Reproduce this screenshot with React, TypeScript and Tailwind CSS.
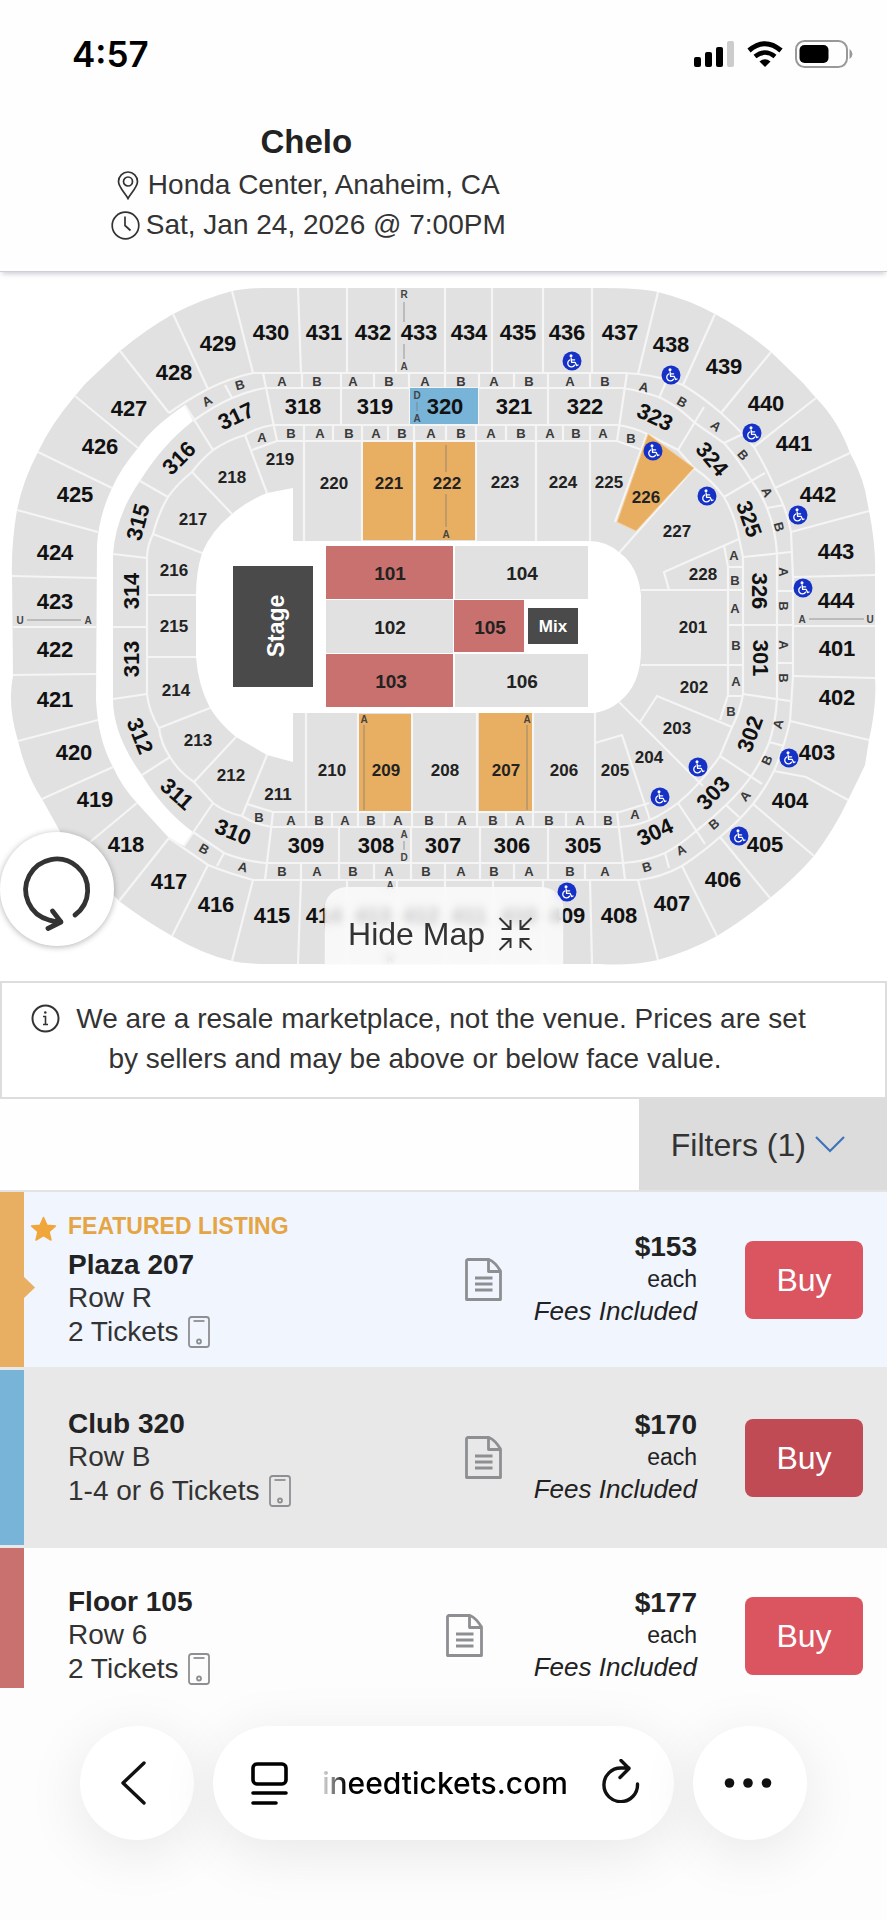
import React from "react";

type Label = [text: string, x: number, y: number, rotate?: number];

const upperLabels: Label[] = [
  ["430", 271, 332], ["431", 324, 332], ["432", 373, 332], ["433", 419, 332],
  ["434", 469, 332], ["435", 518, 332], ["436", 567, 332], ["437", 620, 332],
  ["438", 671, 344], ["439", 724, 366], ["440", 766, 403], ["441", 794, 443],
  ["442", 818, 494], ["443", 836, 551], ["444", 836, 600], ["401", 837, 648],
  ["402", 837, 697], ["403", 817, 752], ["404", 790, 800], ["405", 765, 844],
  ["406", 723, 879], ["407", 672, 903], ["408", 619, 915], ["409", 567, 915],
  ["410", 519, 915], ["411", 469, 915], ["412", 421, 915], ["413", 373, 915],
  ["414", 324, 915], ["415", 272, 915], ["416", 216, 904], ["417", 169, 881],
  ["418", 126, 844], ["419", 95, 799], ["420", 74, 752], ["421", 55, 699],
  ["422", 55, 649], ["423", 55, 601], ["424", 55, 552], ["425", 75, 494],
  ["426", 100, 446], ["427", 129, 408], ["428", 174, 372], ["429", 218, 343],
  ["318", 303, 406], ["319", 375, 406], ["320", 445, 406], ["321", 514, 406],
  ["322", 585, 406], ["323", 655, 417, 25], ["324", 712, 459, 50],
  ["325", 749, 519, 70], ["326", 759, 591, 90], ["301", 760, 658, 90],
  ["302", 750, 734, -70], ["303", 713, 793, -46], ["304", 655, 832, -25],
  ["305", 583, 845], ["306", 512, 845], ["307", 443, 845], ["308", 376, 845],
  ["309", 306, 845], ["310", 233, 832, 22], ["311", 177, 794, 42],
  ["312", 140, 736, 68], ["313", 131, 659, -90], ["314", 131, 591, -90],
  ["315", 138, 522, -75], ["316", 179, 458, -45], ["317", 236, 416, -25],
];

const plazaLabels: Label[] = [
  ["219", 280, 459], ["218", 232, 477], ["217", 193, 519], ["216", 174, 570],
  ["215", 174, 626], ["214", 176, 690], ["213", 198, 740], ["212", 231, 775],
  ["211", 278, 794], ["210", 332, 770], ["209", 386, 770], ["208", 445, 770],
  ["207", 506, 770], ["206", 564, 770], ["205", 615, 770], ["204", 649, 757],
  ["203", 677, 728], ["202", 694, 687], ["201", 693, 627], ["228", 703, 574],
  ["227", 677, 531], ["226", 646, 497], ["225", 609, 482], ["224", 563, 482],
  ["223", 505, 482], ["222", 447, 483], ["221", 389, 483], ["220", 334, 483],
];

const floorLabels: Label[] = [
  ["101", 390, 573], ["102", 390, 627], ["103", 391, 681],
  ["104", 522, 573], ["105", 490, 627], ["106", 522, 681],
];

const rowLabels: Label[] = [
  ["A", 282, 381], ["B", 317, 381], ["A", 353, 381], ["B", 389, 381], ["A", 425, 381],
  ["B", 461, 381], ["A", 494, 381], ["B", 529, 381], ["A", 570, 381], ["B", 605, 381],
  ["B", 282, 871], ["A", 317, 871], ["B", 353, 871], ["A", 389, 871], ["B", 426, 871],
  ["A", 461, 871], ["B", 494, 871], ["A", 529, 871], ["B", 570, 871], ["A", 605, 871],
  ["A", 262, 437], ["B", 291, 433], ["A", 320, 433], ["B", 349, 433], ["A", 376, 433],
  ["B", 402, 433], ["A", 431, 433], ["B", 461, 433], ["A", 491, 433], ["B", 521, 433],
  ["A", 550, 433], ["B", 576, 433], ["A", 603, 433], ["B", 631, 438],
  ["B", 259, 817], ["A", 291, 820], ["B", 319, 820], ["A", 345, 820], ["B", 371, 820],
  ["A", 398, 820], ["B", 429, 820], ["A", 462, 820], ["B", 493, 820], ["A", 520, 820],
  ["B", 549, 820], ["A", 580, 820], ["B", 608, 820], ["A", 635, 814],
  ["A", 734, 555], ["B", 735, 580], ["A", 735, 608], ["B", 736, 645], ["A", 736, 681],
  ["B", 731, 711],
  ["A", 644, 387, 15], ["B", 682, 402, 30], ["A", 716, 426, 40], ["B", 743, 455, 50],
  ["A", 767, 492, 65], ["B", 779, 527, 75], ["A", 783, 572, 90], ["B", 783, 606, 90],
  ["A", 783, 645, 90], ["B", 783, 678, 90], ["A", 778, 724, -75], ["B", 767, 760, -65],
  ["A", 745, 796, -50], ["B", 714, 824, -40], ["A", 681, 850, -25], ["B", 647, 867, -15],
  ["A", 207, 401, -30], ["B", 240, 385, -15], ["B", 204, 849, 30], ["A", 243, 867, 15],
];

const markerLabels: Label[] = [
  ["R", 404, 294], ["A", 404, 366], ["U", 20, 620], ["A", 88, 620],
  ["A", 802, 619], ["U", 870, 619], ["D", 417, 395], ["A", 417, 418],
  ["A", 404, 834], ["D", 404, 857], ["A", 446, 534], ["A", 364, 719],
  ["A", 527, 719], ["A", 390, 885], ["R", 390, 958],
];

const accessible: [number, number][] = [
  [572, 361], [671, 375], [752, 433], [653, 451], [707, 496], [798, 515],
  [803, 588], [789, 758], [739, 836], [698, 767], [660, 797], [567, 892],
];

const bowl =
  "M298 288 C272 288 250 287 232 291 Q202 299 173 314 Q145 330 120 351 L85 384 L75 396 Q51 424 38 452 Q23 480 17 510 Q11 545 12 577 L13 676 Q7 705 18 741 Q26 775 42 799 L62 835 L90 870 L119 901 Q144 920 172 936 Q202 954 232 961 Q245 964 270 964 L600 964 Q630 966 658 960 Q690 951 717 936 Q745 919 770 898 Q795 878 814 856 Q835 828 848 800 Q858 780 865 765 L869 740 Q877 705 875 678 L875 575 Q876 545 869 511 L865 490 Q860 471 850 453 Q838 420 816 398 L803 383 L771 352 Q745 330 715 314 Q690 300 658 292 Q640 288 600 288 Z";

const concourse =
  "M185 405 Q152 427 138 448 Q121 468 112 488 Q99 515 97 545 L96 700 Q98 740 113 767 Q122 787 137 803 L169 838 L184 846 L193 832 Q163 810 142 775 Q113 735 113 699 L113 554 Q116 515 140 481 Q163 444 193 421 Z";

const bowlFloor =
  "M293 488 L267 493 Q247 501 232 514 Q211 531 202 553 Q196 572 196 595 L196 657 Q198 685 210 708 Q220 724 236 737 L267 755 L293 762 L293 713 L595 713 Q610 710 619 702 Q641 685 641 650 L641 595 Q638 566 620 553 Q607 541 589 541 L293 541 Z";

const rings = [
  "M169 413 Q187 400 208 389 Q230 378 253 373 L625 373 L638 374 Q662 377 683 385 Q704 398 721 413 Q740 430 754 447 Q766 467 775 488 Q787 509 791 532 L793 578 L793 676 L790 721 Q784 748 774 771 Q765 789 753 804 Q738 822 720 837 Q702 853 682 866 Q660 878 638 880 L253 880 Q228 873 208 865 L169 838",
  "M193 421 Q212 407 232 398 Q248 391 265 388 L622 388 Q643 391 661 398 Q679 407 695 423 L724 443 Q739 460 751 480 Q761 493 767 508 Q776 530 777 555 L777 698 Q776 722 769 743 Q762 760 752 775 Q741 791 726 805 Q711 820 695 832 Q680 845 665 853 Q645 862 622 863 L266 863 Q244 861 224 853 L193 832",
  "M147 627 L147 558 Q147 546 153 534 Q158 514 168 497 Q178 483 192 472 Q201 460 213 450 Q228 440 245 435 Q258 427 273 425 L617 425 Q633 427 647 434 L678 450 L694 468 Q713 481 724 497 Q735 516 739 538 L743 557 L743 694 Q740 712 732 727 L720 756 Q700 785 678 803 Q665 813 650 820 Q636 826 620 827 L272 827 Q256 825 242 816 Q226 813 213 803 L194 782 Q179 772 170 757 Q161 744 159 728 Q149 712 147 694 Z",
  "M252 450 L277 441 L617 441 L642 450",
  "M247 804 L273 812 L620 812 L649 803",
];

const dividers = [
  // upper deck
  "M298 288L301 373M347 288V373M396 288V373M445 288V373M492 288V373M543 288V373M592 288V373",
  "M298 964L301 880M347 964V880M397 964V880M445 964V880M493 964V880M543 964V880M592 964L590 880",
  "M232 291L253 373M173 314L208 389M120 351L169 413M75 396L138 448M38 452L112 488M17 510L98 532M12 576L97 578M13 627H96M13 675L96 674M18 741L98 720M42 799L113 767M90 842L137 803M119 901L169 838M172 936L208 865M232 961L253 880",
  "M658 292L638 374M715 314L683 385M771 352L721 413M816 398L754 447M850 453L775 488M869 511L791 532M875 575L793 577M875 626H793M875 678L793 676M869 740L790 721M848 800L806 777L774 771M814 856L753 804M770 898L720 837M717 936L682 866M658 960L638 880",
  // club ring
  "M263 373L277 441M341 388V425M410 388V425M478 388V425M548 388V425M627 373L617 441M273 812L265 880M339 827V863M411 827V863M480 827V863M548 827V863M617 812L625 880",
  "M185 405L213 450M140 481L168 497M113 554L147 558M113 627H147M113 699L147 694M142 775L170 757M184 846L213 803",
  "M704 407L678 450M765 473L724 497M791 552L743 557M743 625H793M743 694L790 701M720 756L762 784M678 803L705 844",
  // row strips
  "M302 373V388M341 373V388M374 373V388M409 373V388M445 373V388M479 373V388M514 373V388M548 373V388M590 373V388M301 863V880M339 863V880M374 863V880M411 863V880M445 863V880M480 863V880M514 863V880M548 863V880M585 863V880",
  "M333 425V441M388 425V441M446 425V441M506 425V441M563 425V441M332 812V827M384 812V827M446 812V827M506 812V827M566 812V827",
  "M667 380L659 398M745 433L724 443M784 505L767 508M777 591H793M777 663H793M784 746L769 742M739 817L726 805M669 868L665 853M225 385L232 398M224 853L217 866",
  // plaza
  "M304 425V541M362 425V541M414 425V541M476 425V541M536 425V541M590 425V541M306 713V827M358 713V827M412 713V827M477 713V827M533 713V827M595 713V827",
  "M245 435L267 493M192 472L232 514M153 534L202 553M147 595H196M147 657H196M159 728L210 708M194 782L236 737M242 816L267 755",
  "M647 434L615 522M694 468L619 553M739 539L664 572L669 590M724 545L728 567V695L720 720M728 567H743M641 590H743M728 625H743M641 665H743M728 696H743M640 722L657 696L732 727M619 702L703 786M595 743L622 735L650 820",
];

function MapText({ items, className }: { items: Label[]; className: string }) {
  return (
    <g className={className} textAnchor="middle" dominantBaseline="central">
      {items.map(([text, x, y, r], i) => (
        <text key={i} x={x} y={y} transform={r ? `rotate(${r} ${x} ${y})` : undefined}>
          {text}
        </text>
      ))}
    </g>
  );
}

function SeatMap() {
  return (
    <svg
      viewBox="0 273 887 708"
      className="block w-full font-['Liberation_Sans',Arial,sans-serif] font-bold"
      role="img"
      aria-label="Honda Center seating map"
    >
      <path d={bowl} fill="#e1e1e1" />
      <path d={concourse} fill="#fff" />
      <g fill="none" stroke="#f5f5f5" strokeWidth="2.2">
        {rings.map((d) => <path key={d} d={d} />)}
        {dividers.map((d) => <path key={d} d={d} />)}
      </g>
      <path d={bowlFloor} fill="#fff" />

      <g fill="#e8af63">
        <path d="M363 442H413V540H363ZM416 442H475V540H416ZM359 714H411V811H359ZM479 713H532V811H479Z" />
        <path d="M648 434L694 468L636 531L617 522Z" stroke="#f3cf9d" strokeWidth="1" />
      </g>
      <path d="M410 388H478V424H410Z" fill="#78b4d8" />
      <path d="M326 546H453V599H326ZM326 654H453V707H326ZM454 600H524V652H454Z" fill="#c9716f" />
      <path d="M326 600H453V653H326ZM455 546H588V599H455ZM455 654H588V707H455Z" fill="#e1e1e1" />
      <path d="M233 566H313V687H233ZM528 608H578V644H528Z" fill="#4a4a4a" />

      <g stroke="#777" strokeWidth="1" opacity="0.7">
        <path d="M404 302V322M404 344V359M27 620H81M809 619H864M417 402V411M404 841V850M446 445V472M446 494V527M364 725V810M527 725V810" />
      </g>

      <MapText items={upperLabels} className="fill-[#111] text-[22px]" />
      <MapText items={floorLabels} className="fill-[#222] text-[19px]" />
      <MapText items={plazaLabels} className="fill-[#222] text-[17px]" />
      <MapText items={rowLabels} className="fill-[#3a3a3a] text-[13px]" />
      <MapText items={markerLabels} className="fill-[#444] text-[10px]" />
      <MapText items={[["Stage", 276, 626, -90]]} className="fill-white text-[23px]" />
      <MapText items={[["Mix", 553, 626]]} className="fill-white text-[17px]" />

      {accessible.map(([x, y]) => (
        <g key={`${x}-${y}`} transform={`translate(${x} ${y})`}>
          <circle r="9.5" fill="#1632c6" />
          <circle cx="-1" cy="-5.2" r="1.5" fill="#fff" />
          <path
            d="M-0.9 -3.2L-0.4 1.4H3.2L4.6 4.6L6 4M-0.7 -1.2H2.6M-2.3 -1A3.7 3.7 0 1 0 2.6 4.2"
            fill="none"
            stroke="#fff"
            strokeWidth="1.3"
            strokeLinecap="round"
            strokeLinejoin="round"
          />
        </g>
      ))}
    </svg>
  );
}

function StatusBar() {
  return (
    <div className="flex h-[108px] items-center justify-between pr-[34px] pl-[72px] text-black">
      <time className="font-['Inter',sans-serif] text-[35px] font-semibold">4:57</time>
      <div className="flex items-center gap-3">
        <svg width="41" height="26" viewBox="0 0 41 26" aria-label="Signal">
          <rect x="0" y="16" width="7" height="10" rx="2" />
          <rect x="11" y="11" width="7" height="15" rx="2" />
          <rect x="22" y="6" width="7" height="20" rx="2" />
          <rect x="33" y="0" width="7" height="26" rx="2" fill="#ccc" />
        </svg>
        <svg width="36" height="26" viewBox="0 0 36 26" fill="none" stroke="#000" aria-label="Wi-Fi">
          <path d="M2 9.500Q18 -4 34 9.500" strokeWidth="5" />
          <path d="M8 15.500Q18 7.500 28 15.500" strokeWidth="4.600" />
          <path d="M18 26L12.500 20.500Q18 16 23.500 20.500Z" fill="#000" stroke="none" />
        </svg>
        <svg width="58" height="28" viewBox="0 0 58 28" aria-label="Battery">
          <rect x="1" y="1" width="51" height="26" rx="8.500" fill="none" stroke="#999" strokeWidth="2" />
          <rect x="4.500" y="5" width="29" height="18" rx="5" />
          <path d="M54.500 9Q57.500 11 57.500 14T54.500 19Z" fill="#999" />
        </svg>
      </div>
    </div>
  );
}

function EventHeader() {
  return (
    <header className="relative z-10 h-[164px] border-b border-[#cfcfd8] shadow-[0_4px_5px_-2px_rgba(60,60,100,0.25)]">
      <div className="flex w-[69.5%] flex-col items-center pt-[11px] text-[28px] leading-10 text-[#333]">
        <h1 className="-ml-1 text-[33px] leading-[46px] font-bold text-[#222]">Chelo</h1>
        <p className="flex items-center gap-[9px]">
          <svg width="22" height="29" viewBox="0 0 22 29" fill="none" stroke="#333" strokeWidth="1.700" aria-hidden="true">
            <path d="M11 27.500C8 22 1.500 16 1.500 10.500A9.500 9.500 0 0 1 20.500 10.500C20.500 16 14 22 11 27.500Z" />
            <circle cx="11" cy="10.500" r="4.500" />
          </svg>
          Honda Center, Anaheim, CA
        </p>
        <p className="flex items-center gap-[6px]">
          <svg width="29" height="29" viewBox="0 0 29 29" fill="none" stroke="#333" strokeWidth="1.700" aria-hidden="true">
            <circle cx="14.500" cy="14.500" r="13.300" />
            <path d="M14 5.500V14.500L19.500 19.500" />
          </svg>
          Sat, Jan 24, 2026 @ 7:00PM
        </p>
      </div>
    </header>
  );
}

function PhoneIcon() {
  return (
    <svg width="22" height="32" viewBox="0 0 22 32" fill="none" stroke="#8e8f92" strokeWidth="1.800" aria-label="Mobile tickets">
      <rect x="1" y="1" width="20" height="30" rx="2.500" />
      <path d="M5.500 5H16.500" />
      <circle cx="11" cy="25.500" r="2" />
    </svg>
  );
}

function NotesIcon() {
  return (
    <svg width="37" height="43" viewBox="0 0 37 43" fill="none" stroke="#8e8f92" strokeWidth="2.800" strokeLinejoin="round" aria-hidden="true">
      <path d="M2.500 1.500H24Q30 4 35.500 13V41.500H1.500V2.500Z" />
      <path d="M23.500 1.500V13.500H35.500M10 20H27.500M10 26H27.500M10 32H27.500" />
    </svg>
  );
}

type Listing = {
  name: string;
  row: string;
  tickets: string;
  price: string;
  featured?: boolean;
  rowClass: string;
  barClass: string;
  buyClass: string;
  notesClass: string;
};

const listings: Listing[] = [
  {
    name: "Plaza 207", row: "Row R", tickets: "2 Tickets", price: "$153", featured: true,
    rowClass: "bg-[#f0f5fe]", barClass: "bg-[#e8af63]", buyClass: "bg-[#da5560]", notesClass: "justify-end",
  },
  {
    name: "Club 320", row: "Row B", tickets: "1-4 or 6 Tickets", price: "$170",
    rowClass: "bg-[#e8e8e8]", barClass: "bg-[#78b4d8]", buyClass: "bg-[#c04b55]", notesClass: "justify-end",
  },
  {
    name: "Floor 105", row: "Row 6", tickets: "2 Tickets", price: "$177",
    rowClass: "bg-[#fdfdfd]", barClass: "bg-[#c9716f]", buyClass: "bg-[#da5560]", notesClass: "justify-start",
  },
];

function ListingRow({ item }: { item: Listing }) {
  return (
    <li className={`relative flex h-[178px] items-stretch border-b-[3px] border-[#e8e8e8] ${item.rowClass}`}>
      <div className={`w-6 shrink-0 ${item.barClass}`} />
      {item.featured && (
        <>
          <svg className="absolute top-[84px] left-[23px]" width="12" height="23" viewBox="0 0 12 23" aria-hidden="true">
            <path d="M0 0L12 11.500L0 23Z" fill="#e8af63" />
          </svg>
          <svg className="absolute top-6 left-[30px]" width="27" height="26" viewBox="0 0 27 26" aria-hidden="true">
            <path
              d="M13.500 1.500L17 9.200L25.500 10L19 15.600L21 24L13.500 19.600L6 24L8 15.600L1.500 10L10 9.200Z"
              fill="#f0a63a"
              stroke="#f0a63a"
              strokeWidth="1.500"
              strokeLinejoin="round"
            />
          </svg>
        </>
      )}
      <div className="ml-11 flex flex-1 flex-col justify-center text-[28px] leading-[33px] text-[#333]">
        {item.featured && (
          <p className="mb-[6px] text-[23px] leading-8 font-bold text-[#e5a544]">FEATURED LISTING</p>
        )}
        <h2 className="font-bold text-[#222]">{item.name}</h2>
        <p>{item.row}</p>
        <p className="flex items-center gap-[10px] leading-9">
          {item.tickets}
          <PhoneIcon />
        </p>
      </div>
      <button type="button" aria-label={`Notes for ${item.name}`} className={`flex w-[56px] items-center ${item.notesClass}`}>
        <NotesIcon />
      </button>
      <div className="flex w-[195px] flex-col justify-center pb-[2px] text-right leading-8 text-[#222]">
        <p className="text-[28px] font-bold">{item.price}</p>
        <p className="text-[23px]">each</p>
        <p className="text-[26px] italic">Fees Included</p>
      </div>
      <div className="mr-6 ml-12 flex items-center">
        <button type="button" className={`h-[78px] w-[118px] rounded-lg text-[32px] text-white ${item.buyClass}`}>
          Buy
        </button>
      </div>
    </li>
  );
}

function BrowserBar() {
  const pill =
    "flex h-[114px] shrink-0 items-center justify-center rounded-full bg-white shadow-[0_12px_60px_rgba(0,0,0,0.09)]";
  return (
    <nav className="relative -mt-[38px] flex gap-[19px] bg-[#fdfdfd] px-20 pt-[38px] pb-[81px]">
      <button type="button" aria-label="Back" className={`${pill} w-[114px]`}>
        <svg className="-ml-2" width="26" height="44" viewBox="0 0 26 44" fill="none" stroke="#111" strokeWidth="3.400" strokeLinecap="round" strokeLinejoin="round">
          <path d="M24 2L3 22L24 42" />
        </svg>
      </button>
      <div className="flex h-[114px] flex-1 items-center rounded-full bg-white pr-[34px] pl-[38px] shadow-[0_12px_60px_rgba(0,0,0,0.09)]">
        <button type="button" aria-label="Page menu">
          <svg width="37" height="43" viewBox="0 0 37 43" fill="none" stroke="#000" strokeWidth="3.600" strokeLinecap="round">
            <rect x="2" y="2" width="33" height="20" rx="4" />
            <path d="M2 31H35M2 41H25" />
          </svg>
        </button>
        <span className="flex-1 pl-[34px] font-['Inter',sans-serif] text-[30px] font-medium text-black">
          <span className="bg-linear-to-r from-black/10 to-black to-[24px] bg-clip-text text-transparent">ineedtickets.com</span>
        </span>
        <button type="button" aria-label="Reload">
          <svg className="-mt-1" width="38" height="44" viewBox="0 0 38 44" fill="none" stroke="#111" strokeWidth="3.400" strokeLinecap="round" strokeLinejoin="round">
            <path d="M35.500 25A16.800 16.800 0 1 1 19 9H27M19 1.500L27 9.500L18 18.500" />
          </svg>
        </button>
      </div>
      <button type="button" aria-label="More" className={`${pill} w-[114px]`}>
        <svg className="-ml-1" width="48" height="12" viewBox="0 0 48 12" fill="#111">
          <circle cx="5.500" cy="6" r="4.800" />
          <circle cx="24" cy="6" r="4.800" />
          <circle cx="42.500" cy="6" r="4.800" />
        </svg>
      </button>
    </nav>
  );
}

export default function App() {
  return (
    <div className="min-h-screen bg-[#fefefe] font-['Liberation_Sans',Arial,sans-serif]">
      <StatusBar />
      <EventHeader />
      <main>
        <section className="relative mt-px bg-white">
          <SeatMap />
          <button
            type="button"
            aria-label="Reset map"
            className="absolute bottom-[35px] left-0 size-[114px] rounded-full bg-white shadow-[0_1px_6px_rgba(0,0,0,0.3)]"
          >
            <svg width="114" height="114" viewBox="0 0 114 114" fill="none" stroke="#333" strokeWidth="4.800" strokeLinecap="round" strokeLinejoin="round">
              <path d="M75 83A31 31 0 1 0 49 88Q54 90 61 90M52.500 79L61 90L48 96.500" />
            </svg>
          </button>
          <button
            type="button"
            className="absolute bottom-4 left-1/2 flex h-[78px] w-[239px] -translate-x-1/2 items-center justify-center gap-[14px] rounded-t-[22px] bg-white/75 pt-4 pr-[6px] text-[32px] text-[#333] backdrop-blur-xs"
          >
            Hide Map
            <svg width="34" height="34" viewBox="0 0 34 34" fill="none" stroke="#333" strokeWidth="2" aria-hidden="true">
              <path d="M1 1L12 12M12 3V12H3M33 1L22 12M22 3V12H31M1 33L12 22M12 31V22H3M33 33L22 22M22 31V22H31" />
            </svg>
          </button>
        </section>

        <section className="flex h-[118px] items-start border-2 border-[#ddd] bg-white pt-4 pl-[29px] text-[28px] leading-10 text-[#333]">
          <svg className="mt-[5px] mr-[10px] shrink-0" width="29" height="29" viewBox="0 0 29 29" fill="none" stroke="#333" strokeWidth="2" aria-hidden="true">
            <circle cx="14.500" cy="14.500" r="13" />
            <path d="M12 12.500H14.500V20.500M12 20.500H17" strokeWidth="1.600" />
            <circle cx="14.300" cy="8.500" r="1.300" fill="#333" stroke="none" />
          </svg>
          <p className="max-w-[742px] pr-[52px] text-center">
            <span className="-mr-[52px] whitespace-nowrap">We are a resale marketplace, not the venue. Prices are set</span>{" "}
            by sellers and may be above or below face value.
          </p>
        </section>

        <div className="flex h-[91px] justify-end">
          <button type="button" className="flex w-[28%] items-center justify-center gap-[9px] bg-[#dcdcdc] pr-[10px] text-[32px] text-[#333]">
            Filters (1)
            <svg width="30" height="17" viewBox="0 0 30 17" fill="none" stroke="#3f74b8" strokeWidth="2.200" aria-hidden="true">
              <path d="M1 1L15 15L29 1" />
            </svg>
          </button>
        </div>

        <ul className="border-t-2 border-[#e3e3e3]">
          {listings.map((item) => (
            <ListingRow key={item.name} item={item} />
          ))}
        </ul>
      </main>
      <BrowserBar />
    </div>
  );
}
